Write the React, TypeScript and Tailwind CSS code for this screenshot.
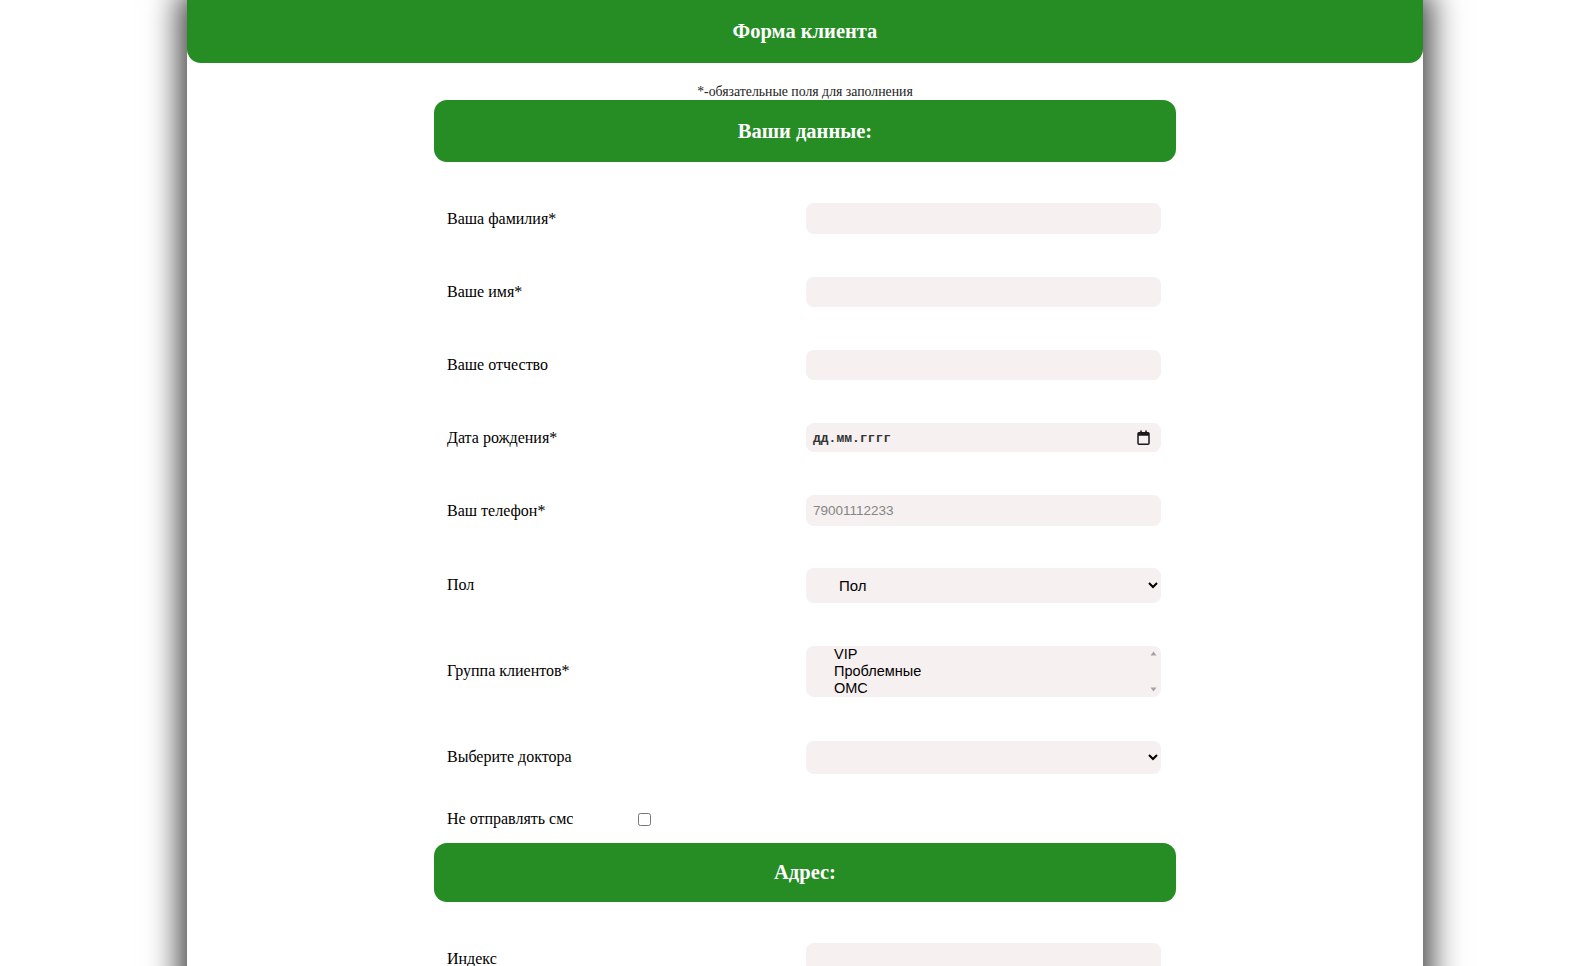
import { ReactNode } from 'react';

const serif = { fontFamily: '"Liberation Serif", "Times New Roman", serif' };

const Row = ({
  label,
  h,
  children,
}: {
  label: string;
  h: string;
  children: ReactNode;
}) => (
  <div className={`flex items-center pl-[13px] ${h}`}>
    <span className="w-[359px] text-[16px] text-black" style={serif}>
      {label}
    </span>
    {children}
  </div>
);

const SectionTitle = ({ title, h }: { title: string; h: string }) => (
  <div
    className={`flex items-center justify-center rounded-[13px] bg-[#268c24] text-[20.5px] font-bold text-white ${h}`}
    style={serif}
  >
    {title}
  </div>
);

const field =
  'w-[355px] rounded-[8px] border-0 bg-[#f6f0f0] outline-none font-[Arial,"Liberation_Sans",sans-serif]';

const CalendarIcon = () => (
  <svg width="13" height="15" viewBox="0 0 13 15" className="text-[#1a1a1a]">
    <rect x="1" y="2.75" width="11" height="11.5" rx="1" fill="none" stroke="currentColor" strokeWidth="1.5" />
    <rect x="1" y="2.75" width="11" height="3" fill="currentColor" />
    <rect x="3.2" y="0.5" width="1.6" height="2.5" fill="currentColor" />
    <rect x="8.2" y="0.5" width="1.6" height="2.5" fill="currentColor" />
  </svg>
);

const ClientForm = () => {
  return (
    <div className="mx-auto w-[742px]">
      <SectionTitle title="Ваши данные:" h="h-[62px]" />
      <div className="mt-[20px]">
        <Row label="Ваша фамилия*" h="h-[73px]">
          <input className={`${field} h-[31px]`} />
        </Row>
        <Row label="Ваше имя*" h="h-[73px]">
          <input className={`${field} h-[30px]`} />
        </Row>
        <Row label="Ваше отчество" h="h-[73px]">
          <input className={`${field} h-[30px]`} />
        </Row>
        <Row label="Дата рождения*" h="h-[73px]">
          <div className={`${field} flex h-[29px] items-center justify-between pl-[7px] pr-[11px]`}>
            <span
              className="pt-[2px] text-[13px] leading-[15px] font-bold text-[#333]"
              style={{ fontFamily: '"Liberation Mono", monospace' }}
            >
              дд.мм.гггг
            </span>
            <CalendarIcon />
          </div>
        </Row>
        <Row label="Ваш телефон*" h="h-[73px]">
          <input
            className={`${field} h-[31px] px-[7px] text-[13.5px] placeholder:text-[#858585]`}
            placeholder="79001112233"
          />
        </Row>
        <Row label="Пол" h="h-[76px]">
          <select className={`${field} h-[35px] pl-[29px] pr-[8px] text-[15px] text-black`} defaultValue="">
            <option value="">Пол</option>
            <option value="m">Мужской</option>
            <option value="f">Женский</option>
          </select>
        </Row>
        <Row label="Группа клиентов*" h="h-[96px]">
          <div className={`${field} flex h-[51px] overflow-hidden`}>
            <select
              multiple
              size={3}
              className="h-[51px] flex-1 overflow-hidden border-0 bg-transparent pl-[28px] text-[14.5px] leading-[17px] text-black outline-none"
              style={{ fontFamily: 'Arial, "Liberation Sans", sans-serif' }}
            >
              <option>VIP</option>
              <option>Проблемные</option>
              <option>ОМС</option>
              <option>ДМС</option>
            </select>
            <div className="flex w-[15px] flex-col items-center justify-between py-[5px]">
              <svg width="7" height="5" viewBox="0 0 7 5">
                <path d="M3.5 0.5 L6.5 4.5 L0.5 4.5 Z" fill="#a3a3a3" />
              </svg>
              <svg width="7" height="5" viewBox="0 0 7 5">
                <path d="M0.5 0.5 L6.5 0.5 L3.5 4.5 Z" fill="#a3a3a3" />
              </svg>
            </div>
          </div>
        </Row>
        <Row label="Выберите доктора" h="h-[76px]">
          <select className={`${field} h-[33px] pl-[27px] pr-[8px] text-[15px]`} defaultValue="">
            <option value=""></option>
            <option value="1">Иванов</option>
          </select>
        </Row>
        <div className="flex h-[48px] items-center pl-[13px]">
          <span className="w-[191px] text-[16px] text-black" style={serif}>
            Не отправлять смс
          </span>
          <input type="checkbox" className="h-[13px] w-[13px]" />
        </div>
      </div>
      <SectionTitle title="Адрес:" h="h-[59px]" />
      <div className="mt-[20px]">
        <Row label="Индекс" h="h-[73px]">
          <input className={`${field} h-[31px]`} />
        </Row>
        <Row label="Страна" h="h-[73px]">
          <input className={`${field} h-[31px]`} />
        </Row>
      </div>
    </div>
  );
};

export default function App() {
  return (
    <div className="h-[966px] overflow-hidden bg-white">
      <div className="ml-[187px] min-h-[1200px] w-[1236px] bg-white shadow-[0_0_30px_8px_rgba(0,0,0,0.75)]">
        <div
          className="flex h-[63px] items-center justify-center rounded-b-[14px] bg-[#268c24] text-[20.5px] font-bold text-white"
          style={serif}
        >
          Форма клиента
        </div>
        <div className="mt-[21px] text-center text-[13.8px] leading-[16px] text-[#222]" style={serif}>
          *-обязательные поля для заполнения
        </div>
        <ClientForm />
      </div>
    </div>
  );
}
